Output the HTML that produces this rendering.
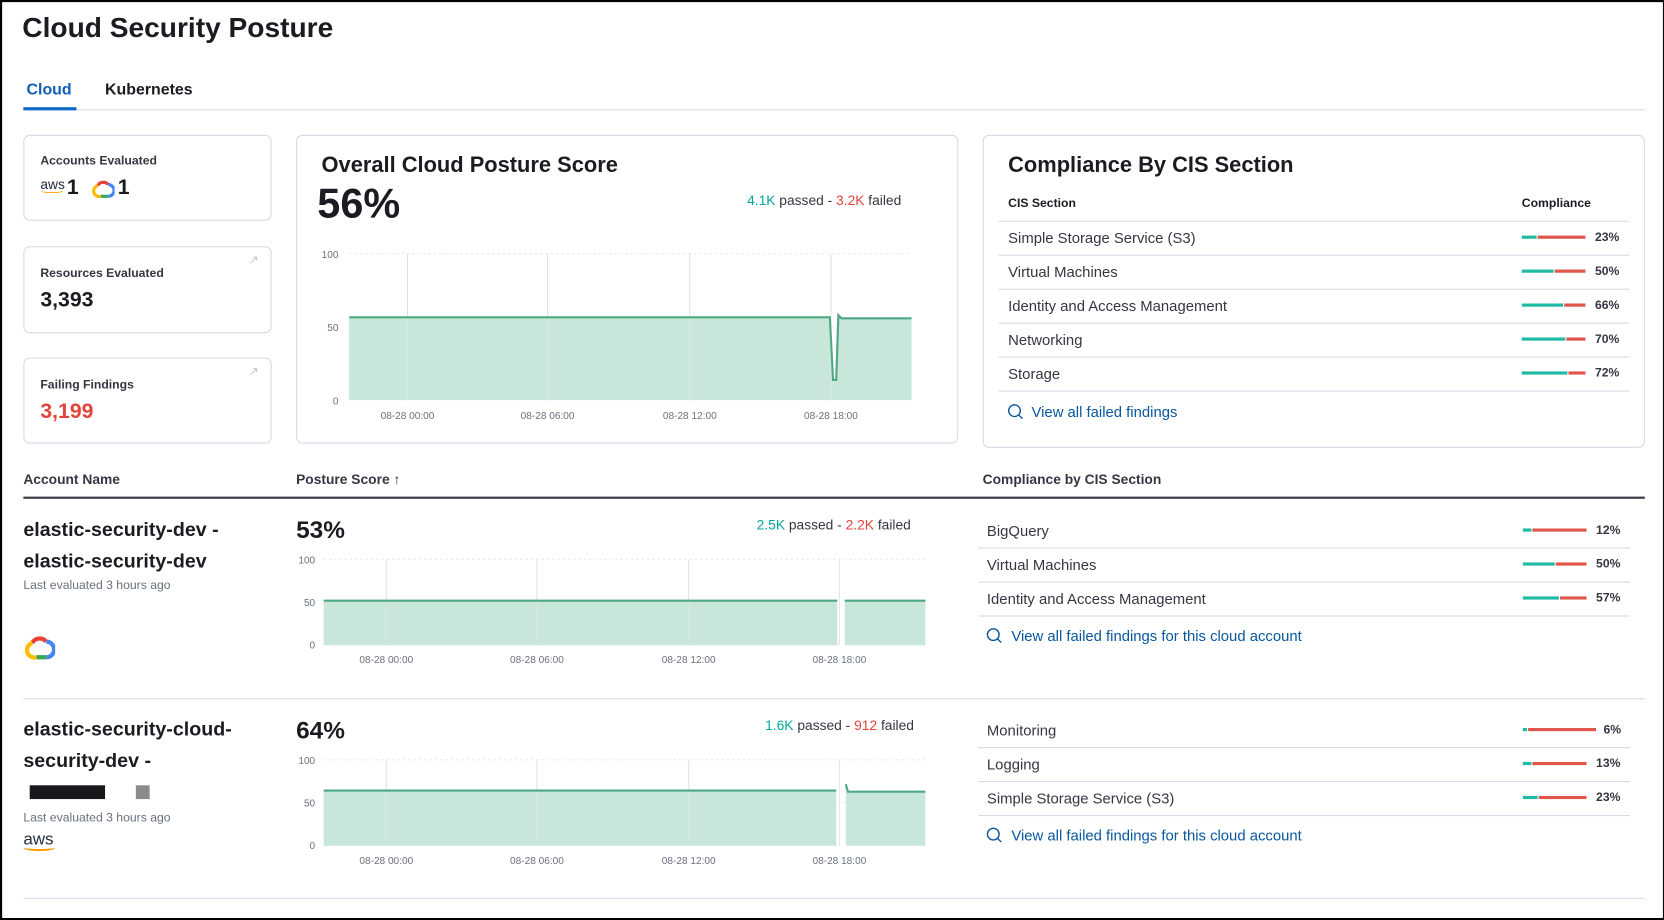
<!DOCTYPE html>
<html><head><meta charset="utf-8"><style>
*{margin:0;padding:0;box-sizing:border-box}
html,body{width:1664px;height:920px;overflow:hidden;background:#fff}
#w{position:absolute;left:0;top:0;width:1568px;height:867px;transform:scale(1.0612);transform-origin:0 0;font-family:"Liberation Sans",sans-serif;color:#1a1c21}
#fr{position:absolute;left:0;top:0;width:1568px;height:867px;border:2px solid #000;border-right:1px solid #000}
.a{position:absolute;white-space:nowrap}
.card{position:absolute;border:1px solid #d3dae6;border-radius:6px;background:#fff}
.b{font-weight:bold}
.t{color:#00a69b}.r{color:#e0443a}
.ln{position:absolute;height:1px;background:#d3dae6}
.bar{position:absolute;height:3px}
.lk{color:#07569e;font-size:14px}
</style></head><body><div id="w">
<div id="fr"></div>
<div class="a b" style="left:21px;top:11px;font-size:26.5px">Cloud Security Posture</div>
<div class="a b" style="left:25px;top:76px;font-size:15px;color:#0f5fb3">Cloud</div>
<div class="a b" style="left:99px;top:76px;font-size:15px">Kubernetes</div>
<div class="ln" style="left:22px;top:103px;width:1528px"></div>
<div class="a" style="left:22px;top:101px;width:50px;height:3px;background:#0f6ac7"></div>

<div class="card" style="left:22px;top:127px;width:234px;height:81px"></div>
<div class="a b" style="left:38px;top:146px;font-size:11.5px;color:#343741">Accounts Evaluated</div>
<div class="a" style="left:38px;top:168px;font-size:13px;color:#232f3e;line-height:12px">aws<div style="width:22px;height:5px;border-bottom:1.5px solid #f90;border-radius:0 0 50% 50%;margin-top:-3px"></div></div>
<div class="a b" style="left:63px;top:166px;font-size:20px">1</div>
<svg class="a" style="left:86px;top:169px" width="22" height="18" viewBox="0 0 22 18"><path d="M6 6 A6 6 0 0 1 16 5" stroke="#ea4335" stroke-width="3" fill="none"/><path d="M16 5 A5 5 0 0 1 16 16" stroke="#4285f4" stroke-width="3" fill="none"/><path d="M16 16 H9" stroke="#34a853" stroke-width="3" fill="none"/><path d="M9 16 A5 5 0 0 1 6 6" stroke="#fbbc05" stroke-width="3" fill="none"/></svg>
<div class="a b" style="left:111px;top:166px;font-size:20px">1</div>

<div class="card" style="left:22px;top:232px;width:234px;height:82px"></div>
<div class="a b" style="left:38px;top:252px;font-size:11.5px;color:#343741">Resources Evaluated</div>
<div class="a b" style="left:38px;top:272px;font-size:20px">3,393</div>
<div class="a" style="left:234px;top:238px;font-size:12px;color:#c2c7d0">↗</div>
<div class="card" style="left:22px;top:337px;width:234px;height:81px"></div>
<div class="a b" style="left:38px;top:357px;font-size:11.5px;color:#343741">Failing Findings</div>
<div class="a b" style="left:38px;top:377px;font-size:20px;color:#e0443a">3,199</div>
<div class="a" style="left:234px;top:343px;font-size:12px;color:#c2c7d0">↗</div>

<div class="card" style="left:279px;top:127px;width:624px;height:291px"></div>
<div class="a b" style="left:303px;top:144px;font-size:20.6px">Overall Cloud Posture Score</div>
<div class="a b" style="left:299px;top:171px;font-size:39px">56%</div>
<div class="a" style="left:704px;top:181px;font-size:13px;color:#343741"><span class="t">4.1K</span> passed - <span class="r">3.2K</span> failed</div>
<svg class="a" style="left:279px;top:230px" width="624" height="170">
<g fill="#69707d" font-size="9.5" font-family="Liberation Sans,sans-serif" text-anchor="end"><text x="40" y="13">100</text><text x="40" y="82">50</text><text x="40" y="151">0</text></g>
<line x1="50" y1="9" x2="580" y2="9" stroke="#e3e6ea" stroke-dasharray="2 3"/>
<line x1="50" y1="78" x2="580" y2="78" stroke="#e3e6ea" stroke-dasharray="2 3"/>
<path d="M50 69 H503 L506 128 H509 L511 67 L514 70 H580 V147 H50Z" fill="#c8e6da"/>
<g stroke="#d5e9e1"><line x1="105" y1="9" x2="105" y2="147"/><line x1="237" y1="9" x2="237" y2="147"/><line x1="371" y1="9" x2="371" y2="147"/><line x1="504" y1="9" x2="504" y2="147"/></g>
<path d="M50 69 H503 L506 128 H509 L511 67 L514 70 H580" stroke="#4fa883" stroke-width="2" fill="none"/>
<g fill="#69707d" font-size="9.5" font-family="Liberation Sans,sans-serif" text-anchor="middle"><text x="105" y="165">08-28 00:00</text><text x="237" y="165">08-28 06:00</text><text x="371" y="165">08-28 12:00</text><text x="504" y="165">08-28 18:00</text></g>
</svg>

<div class="card" style="left:926px;top:127px;width:624px;height:295px"></div>
<div class="a b" style="left:950px;top:144px;font-size:20.6px">Compliance By CIS Section</div>
<div class="a b" style="left:950px;top:186px;font-size:11.5px">CIS Section</div>
<div class="a b" style="left:1434px;top:186px;font-size:11.5px">Compliance</div>
<div class="ln" style="left:941px;top:208px;width:594px"></div>
<div class="ln" style="left:941px;top:240px;width:594px"></div>
<div class="ln" style="left:941px;top:272px;width:594px"></div>
<div class="ln" style="left:941px;top:304px;width:594px"></div>
<div class="ln" style="left:941px;top:336px;width:594px"></div>
<div class="ln" style="left:941px;top:368px;width:594px"></div>
<div class="a" style="left:950px;top:216px;font-size:14px;color:#343741">Simple Storage Service (S3)</div>
<div class="a" style="left:950px;top:248px;font-size:14px;color:#343741">Virtual Machines</div>
<div class="a" style="left:950px;top:280px;font-size:14px;color:#343741">Identity and Access Management</div>
<div class="a" style="left:950px;top:312px;font-size:14px;color:#343741">Networking</div>
<div class="a" style="left:950px;top:344px;font-size:14px;color:#343741">Storage</div>
<div class="bar" style="left:1434px;top:222px;width:14px;background:#1fb9a4"></div><div class="bar" style="left:1449px;top:222px;width:45px;background:#e0564b"></div>
<div class="bar" style="left:1434px;top:254px;width:30px;background:#1fb9a4"></div><div class="bar" style="left:1465px;top:254px;width:29px;background:#e0564b"></div>
<div class="bar" style="left:1434px;top:286px;width:39px;background:#1fb9a4"></div><div class="bar" style="left:1474px;top:286px;width:20px;background:#e0564b"></div>
<div class="bar" style="left:1434px;top:318px;width:41px;background:#1fb9a4"></div><div class="bar" style="left:1476px;top:318px;width:18px;background:#e0564b"></div>
<div class="bar" style="left:1434px;top:350px;width:43px;background:#1fb9a4"></div><div class="bar" style="left:1478px;top:350px;width:16px;background:#e0564b"></div>
<div class="a b" style="left:1503px;top:218px;font-size:11.5px;color:#343741">23%</div>
<div class="a b" style="left:1503px;top:250px;font-size:11.5px;color:#343741">50%</div>
<div class="a b" style="left:1503px;top:282px;font-size:11.5px;color:#343741">66%</div>
<div class="a b" style="left:1503px;top:314px;font-size:11.5px;color:#343741">70%</div>
<div class="a b" style="left:1503px;top:346px;font-size:11.5px;color:#343741">72%</div>
<svg class="a" style="left:949px;top:380px" width="16" height="16" viewBox="0 0 16 16"><circle cx="7" cy="7" r="5.5" stroke="#07569e" stroke-width="1.3" fill="none"/><path d="M11 11 L14.5 14.5" stroke="#07569e" stroke-width="1.3"/></svg>
<div class="a lk" style="left:972px;top:380px">View all failed findings</div>

<div class="a b" style="left:22px;top:444px;font-size:13px;color:#343741">Account Name</div>
<div class="a b" style="left:279px;top:444px;font-size:13px;color:#343741">Posture Score ↑</div>
<div class="a b" style="left:926px;top:444px;font-size:13px;color:#343741">Compliance by CIS Section</div>
<div class="a" style="left:22px;top:468px;width:1528px;height:2px;background:#343741"></div>

<div class="a b" style="left:22px;top:484px;font-size:18.5px;line-height:30px">elastic-security-dev -<br>elastic-security-dev</div>
<div class="a" style="left:22px;top:546px;font-size:11.5px;color:#69707d">Last evaluated 3 hours ago</div>
<svg class="a" style="left:22px;top:598px" width="30" height="24" viewBox="0 0 22 18"><path d="M6 6 A6 6 0 0 1 16 5" stroke="#ea4335" stroke-width="3" fill="none"/><path d="M16 5 A5 5 0 0 1 16 16" stroke="#4285f4" stroke-width="3" fill="none"/><path d="M16 16 H9" stroke="#34a853" stroke-width="3" fill="none"/><path d="M9 16 A5 5 0 0 1 6 6" stroke="#fbbc05" stroke-width="3" fill="none"/></svg>
<div class="a b" style="left:279px;top:486px;font-size:23px">53%</div>
<div class="a" style="left:713px;top:487px;font-size:13px;color:#343741"><span class="t">2.5K</span> passed - <span class="r">2.2K</span> failed</div>
<svg class="a" style="left:279px;top:520px" width="600" height="110">
<g fill="#69707d" font-size="9.5" font-family="Liberation Sans,sans-serif" text-anchor="end"><text x="18" y="11">100</text><text x="18" y="51">50</text><text x="18" y="91">0</text></g>
<line x1="26" y1="7" x2="593" y2="7" stroke="#e3e6ea" stroke-dasharray="2 3"/>
<path d="M26 46 H510 V88 H26Z M517 46 H593 V88 H517Z" fill="#c8e6da"/>
<g stroke="#d5e9e1"><line x1="85" y1="7" x2="85" y2="88"/><line x1="227" y1="7" x2="227" y2="88"/><line x1="370" y1="7" x2="370" y2="88"/><line x1="512" y1="7" x2="512" y2="88" stroke="#e3e6ea"/></g>
<path d="M26 46 H510 M517 46 H593" stroke="#4fa883" stroke-width="2" fill="none"/>
<g fill="#69707d" font-size="9.5" font-family="Liberation Sans,sans-serif" text-anchor="middle"><text x="85" y="105">08-28 00:00</text><text x="227" y="105">08-28 06:00</text><text x="370" y="105">08-28 12:00</text><text x="512" y="105">08-28 18:00</text></g>
</svg>
<div class="ln" style="left:922px;top:516px;width:614px"></div>
<div class="ln" style="left:922px;top:548px;width:614px"></div>
<div class="ln" style="left:922px;top:580px;width:614px"></div>
<div class="a" style="left:930px;top:492px;font-size:14px;color:#343741">BigQuery</div>
<div class="a" style="left:930px;top:524px;font-size:14px;color:#343741">Virtual Machines</div>
<div class="a" style="left:930px;top:556px;font-size:14px;color:#343741">Identity and Access Management</div>
<div class="bar" style="left:1435px;top:498px;width:8px;background:#1fb9a4"></div><div class="bar" style="left:1444px;top:498px;width:51px;background:#e0564b"></div>
<div class="bar" style="left:1435px;top:530px;width:30px;background:#1fb9a4"></div><div class="bar" style="left:1466px;top:530px;width:29px;background:#e0564b"></div>
<div class="bar" style="left:1435px;top:562px;width:34px;background:#1fb9a4"></div><div class="bar" style="left:1470px;top:562px;width:25px;background:#e0564b"></div>
<div class="a b" style="left:1504px;top:494px;font-size:11.5px;color:#343741">12%</div>
<div class="a b" style="left:1504px;top:526px;font-size:11.5px;color:#343741">50%</div>
<div class="a b" style="left:1504px;top:558px;font-size:11.5px;color:#343741">57%</div>
<svg class="a" style="left:929px;top:591px" width="16" height="16" viewBox="0 0 16 16"><circle cx="7" cy="7" r="5.5" stroke="#07569e" stroke-width="1.3" fill="none"/><path d="M11 11 L14.5 14.5" stroke="#07569e" stroke-width="1.3"/></svg>
<div class="a lk" style="left:953px;top:591px">View all failed findings for this cloud account</div>
<div class="ln" style="left:22px;top:658px;width:1528px"></div>

<div class="a b" style="left:22px;top:672px;font-size:18.5px;line-height:30px">elastic-security-cloud-<br>security-dev -</div>
<div class="a" style="left:28px;top:740px;width:71px;height:13px;background:#17181c"></div>
<div class="a" style="left:128px;top:740px;width:13px;height:13px;background:#8a8a8a"></div>
<div class="a" style="left:22px;top:765px;font-size:11.5px;color:#69707d">Last evaluated 3 hours ago</div>
<div class="a" style="left:22px;top:785px;font-size:16px;color:#232f3e;line-height:14px">aws<div style="width:30px;height:6px;border-bottom:2px solid #f90;border-radius:0 0 50% 50%;margin-top:-3px"></div></div>
<div class="a b" style="left:279px;top:675px;font-size:23px">64%</div>
<div class="a" style="left:721px;top:676px;font-size:13px;color:#343741"><span class="t">1.6K</span> passed - <span class="r">912</span> failed</div>
<svg class="a" style="left:279px;top:709px" width="600" height="110">
<g fill="#69707d" font-size="9.5" font-family="Liberation Sans,sans-serif" text-anchor="end"><text x="18" y="11">100</text><text x="18" y="51">50</text><text x="18" y="91">0</text></g>
<line x1="26" y1="7" x2="593" y2="7" stroke="#e3e6ea" stroke-dasharray="2 3"/>
<line x1="26" y1="47" x2="593" y2="47" stroke="#e3e6ea" stroke-dasharray="2 3"/>
<path d="M26 36 H509 V88 H26Z M518 30 L520 37 H593 V88 H518Z" fill="#c8e6da"/>
<g stroke="#d5e9e1"><line x1="85" y1="7" x2="85" y2="88"/><line x1="227" y1="7" x2="227" y2="88"/><line x1="370" y1="7" x2="370" y2="88"/><line x1="512" y1="7" x2="512" y2="88" stroke="#e3e6ea"/></g>
<path d="M26 36 H509 M518 30 L520 37 H593" stroke="#4fa883" stroke-width="2" fill="none"/>
<g fill="#69707d" font-size="9.5" font-family="Liberation Sans,sans-serif" text-anchor="middle"><text x="85" y="105">08-28 00:00</text><text x="227" y="105">08-28 06:00</text><text x="370" y="105">08-28 12:00</text><text x="512" y="105">08-28 18:00</text></g>
</svg>
<div class="ln" style="left:922px;top:704px;width:614px"></div>
<div class="ln" style="left:922px;top:736px;width:614px"></div>
<div class="ln" style="left:922px;top:768px;width:614px"></div>
<div class="a" style="left:930px;top:680px;font-size:14px;color:#343741">Monitoring</div>
<div class="a" style="left:930px;top:712px;font-size:14px;color:#343741">Logging</div>
<div class="a" style="left:930px;top:744px;font-size:14px;color:#343741">Simple Storage Service (S3)</div>
<div class="bar" style="left:1435px;top:686px;width:4px;background:#1fb9a4"></div><div class="bar" style="left:1440px;top:686px;width:64px;background:#e0564b"></div>
<div class="bar" style="left:1435px;top:718px;width:8px;background:#1fb9a4"></div><div class="bar" style="left:1444px;top:718px;width:51px;background:#e0564b"></div>
<div class="bar" style="left:1435px;top:750px;width:14px;background:#1fb9a4"></div><div class="bar" style="left:1450px;top:750px;width:45px;background:#e0564b"></div>
<div class="a b" style="left:1511px;top:682px;font-size:11.5px;color:#343741">6%</div>
<div class="a b" style="left:1504px;top:714px;font-size:11.5px;color:#343741">13%</div>
<div class="a b" style="left:1504px;top:746px;font-size:11.5px;color:#343741">23%</div>
<svg class="a" style="left:929px;top:779px" width="16" height="16" viewBox="0 0 16 16"><circle cx="7" cy="7" r="5.5" stroke="#07569e" stroke-width="1.3" fill="none"/><path d="M11 11 L14.5 14.5" stroke="#07569e" stroke-width="1.3"/></svg>
<div class="a lk" style="left:953px;top:779px">View all failed findings for this cloud account</div>
<div class="ln" style="left:22px;top:846px;width:1528px"></div>
</div></body></html>
